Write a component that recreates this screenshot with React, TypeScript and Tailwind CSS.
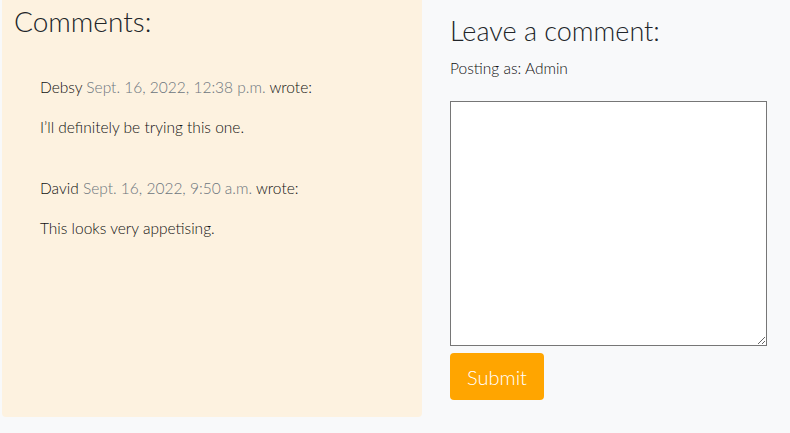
import React from "react";

type Comment = { name: string; date: string; body: string };

const comments: Comment[] = [
  { name: "Debsy", date: "Sept. 16, 2022, 12:38 p.m.", body: "I’ll definitely be trying this one." },
  { name: "David", date: "Sept. 16, 2022, 9:50 a.m.", body: "This looks very appetising." },
];

export default function App() {
  return (
    <div
      className="flex min-h-[433px] w-full bg-[#f8f9fa] text-[#111] font-light"
      style={{ fontFamily: "Lato, 'Open Sans', sans-serif" }}
    >
      <div className="ml-[2px] h-[417px] w-[420px] rounded-b-[4px] bg-[#fdf2e0] pl-3 pt-[5px]">
        <h3 className="text-[28px] leading-[1.2] text-[#212529]">Comments:</h3>
        <div className="mt-[36px] pl-[26px]">
          {comments.map((c) => (
            <div key={c.name} className="mb-[37px]">
              <p className="text-[15.5px] leading-6">
                {c.name} <span className="text-[#6c757d]">{c.date}</span> wrote:
              </p>
              <p className="mt-4 text-[15.5px] leading-6">{c.body}</p>
            </div>
          ))}
        </div>
      </div>
      <div className="ml-[28px] flex w-[317px] flex-col pt-[15px]">
        <h3 className="text-[27px] leading-[1.2] text-[#212529]">Leave a comment:</h3>
        <p className="mt-[9px] text-[15.5px] leading-6">Posting as: Admin</p>
        <textarea className="mt-[21px] h-[245px] w-[317px] resize-y border border-[#767676] bg-white" />
        <button className="mt-[7px] h-[47px] w-[94px] rounded-[4px] bg-[#ffa500] text-[20px] text-white">
          Submit
        </button>
      </div>
    </div>
  );
}
